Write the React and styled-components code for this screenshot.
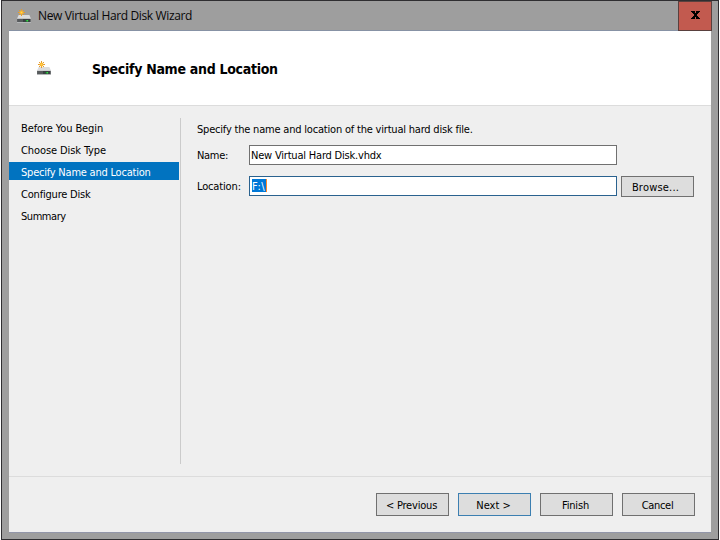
import React from "react";
import styled, { createGlobalStyle } from "styled-components";

const Global = createGlobalStyle`
  * { box-sizing: border-box; }
  html, body { margin: 0; background: #fff; }
  body { overflow: hidden; }
`;

const Frame = styled.main`
  width: 718px;
  height: 540px;
  margin-left: 1px;
  display: flex;
  flex-direction: column;
  border: 1px solid #2f2e31;
  padding: 0 7px 7px;
  background: #9e9e9e;
  color: #000;
  font: 11px/14px "DejaVu Sans Condensed", "DejaVu Sans", sans-serif;
  font-stretch: condensed;
`;

const TitleBar = styled.header`
  flex: 0 0 30px;
  display: flex;
  align-items: center;
  padding-left: 8px;
  border-bottom: 1px solid #8792a5;
`;

const WindowTitle = styled.span`
  flex: 1;
  margin-left: 7px;
  padding-top: 1px;
  font: 12px/16px "Open Sans", sans-serif;
  letter-spacing: ${(p) => p.$spacing}px;
  color: #080808;
`;

const CloseButton = styled.button`
  width: 34px;
  height: 30px;
  margin: 0 -1px -1px 0;
  padding: 0 0 2px;
  display: flex;
  align-items: center;
  justify-content: center;
  border: 1px solid #59403e;
  background: #c25a4f;
`;

const Client = styled.section`
  flex: 1;
  display: flex;
  flex-direction: column;
  background: #efefef;
  box-shadow: 0 1px #9296a9;
`;

const Banner = styled.div`
  flex: 0 0 75px;
  display: flex;
  align-items: center;
  padding-left: 28px;
  background: #fff;
  border-bottom: 1px solid #dcdcdc;
`;

const Heading = styled.h1`
  margin: 2px 0 0 41px;
  font: bold 14px/18px "DejaVu Sans Condensed", "DejaVu Sans", sans-serif;
  font-stretch: condensed;
  letter-spacing: ${(p) => p.$spacing}px;
`;

const Body = styled.div`
  flex: 1;
  display: flex;
  padding: 12px 0;
`;

const Steps = styled.nav`
  width: 172px;
  display: flex;
  flex-direction: column;
  gap: 4px;
  border-right: 1px solid #cbcbcb;
`;

const Step = styled.a`
  width: 170px;
  height: 18px;
  padding: 4px 0 0 12px;
  line-height: 13px;
  letter-spacing: ${(p) => p.$spacing}px;
  color: ${(p) => (p.$active ? "#fff" : "#000")};
  background: ${(p) => (p.$active ? "#0173c0" : "transparent")};
`;

const Form = styled.div`
  padding: 5px 0 0 16px;
`;

const Label = styled.span`
  letter-spacing: ${(p) => p.$spacing}px;
  white-space: nowrap;
`;

const Prompt = styled.div`
  height: 22px;
  white-space: nowrap;
  letter-spacing: ${(p) => p.$spacing}px;
`;

const Field = styled.div`
  height: 31px;
  display: grid;
  grid-template-columns: 52px 368px 77px;
  align-items: start;

  & > ${Label} { padding-top: 4px; }
`;

const TextBox = styled.div`
  height: 20px;
  padding: 3px 1px;
  background: #fff;
  border: 1px solid ${(p) => (p.$focused ? "#2a628f" : "#707070")};
`;

const Selection = styled.span`
  display: block;
  width: 15px;
  height: 13px;
  margin: -1px 0 0 1px;
  line-height: 16px;
  letter-spacing: ${(p) => p.$spacing}px;
  color: #fff;
  background: #0078d7;
  border-right: 1px solid #ff8728;
`;

const Button = styled.button`
  width: 73px;
  height: 23px;
  margin: 0;
  padding: 2px 2px 0 0;
  border: 1px solid ${(p) => (p.$default ? "#3c7fb1" : "#707070")};
  background: #dddddd;
  color: #000;
  font: inherit;
  letter-spacing: ${(p) => p.$spacing}px;
`;

const BrowseButton = styled(Button)`
  height: 21px;
  margin-left: 4px;
  padding: 2px 4px 0 0;
`;

const Footer = styled.footer`
  flex: 0 0 56px;
  display: flex;
  justify-content: flex-end;
  gap: 9px;
  padding: 16px 16px 0 0;
  border-top: 1px solid #dcdcdc;
`;

const DiskIcon = () => (
  <svg width="14" height="14" viewBox="0 0 14 14" aria-hidden="true">
    <path d="M1.6 6h10.8L14 9.8H0z" fill="#dcdcdd" />
    <path d="M0 9.5h14V14H0z" fill="#b4b6b8" />
    <path d="M0.4 10h13.2v3H0.4z" fill="#3b4042" />
    <path d="M0.4 10H6v3H0.4z" fill="#575b5d" />
    <path d="M8.5 11h3v1.4h-3z" fill="#1d7a2d" />
    <path d="M9.6 11h1.2v1.4H9.6z" fill="#3df050" />
    <path d="M4.5 0v7M1 3.5h7M2 1l5 5M7 1L2 6" stroke="#e39a2e" strokeWidth="1" fill="none" />
    <circle cx="4.5" cy="3.5" r="2" fill="#fbb72c" />
    <circle cx="4.5" cy="3.5" r="0.8" fill="#ffd65c" />
  </svg>
);

const CloseIcon = () => (
  <svg width="9" height="8" viewBox="0 0 9 8" shapeRendering="crispEdges" aria-hidden="true">
    <path d="M0 0h4v1H0zM5 0h4v1H5zM1 1h3v1H1zM5 1h3v1H5zM2 2h5v1H2zM3 3h3v2H3zM2 5h5v1H2zM1 6h3v1H1zM5 6h3v1H5zM0 7h4v1H0zM5 7h4v1H5z" />
  </svg>
);

const steps = [
  { name: "Before You Begin", spacing: -0.1 },
  { name: "Choose Disk Type", spacing: -0.1 },
  { name: "Specify Name and Location", spacing: -0.22, active: true },
  { name: "Configure Disk", spacing: -0.2 },
  { name: "Summary", spacing: -0.45 },
];

export default function App() {
  return (
    <>
      <Global />
      <Frame>
        <TitleBar>
          <DiskIcon />
          <WindowTitle $spacing={-0.36}>New Virtual Hard Disk Wizard</WindowTitle>
          <CloseButton aria-label="Close"><CloseIcon /></CloseButton>
        </TitleBar>
        <Client>
          <Banner>
            <DiskIcon />
            <Heading $spacing={-0.29}>Specify Name and Location</Heading>
          </Banner>
          <Body>
            <Steps>
              {steps.map((s) => (
                <Step key={s.name} $active={s.active} $spacing={s.spacing}>{s.name}</Step>
              ))}
            </Steps>
            <Form>
              <Prompt $spacing={-0.2}>Specify the name and location of the virtual hard disk file.</Prompt>
              <Field>
                <Label $spacing={-0.3}>Name:</Label>
                <TextBox><Label $spacing={-0.2}>New Virtual Hard Disk.vhdx</Label></TextBox>
              </Field>
              <Field>
                <Label $spacing={-0.15}>Location:</Label>
                <TextBox $focused><Selection $spacing={0.6}>F:\</Selection></TextBox>
                <BrowseButton $spacing={0.2}>Browse...</BrowseButton>
              </Field>
            </Form>
          </Body>
          <Footer>
            <Button $spacing={-0.2}>&lt; Previous</Button>
            <Button $default $spacing={0}>Next &gt;</Button>
            <Button $spacing={-0.15}>Finish</Button>
            <Button $spacing={-0.3}>Cancel</Button>
          </Footer>
        </Client>
      </Frame>
    </>
  );
}
